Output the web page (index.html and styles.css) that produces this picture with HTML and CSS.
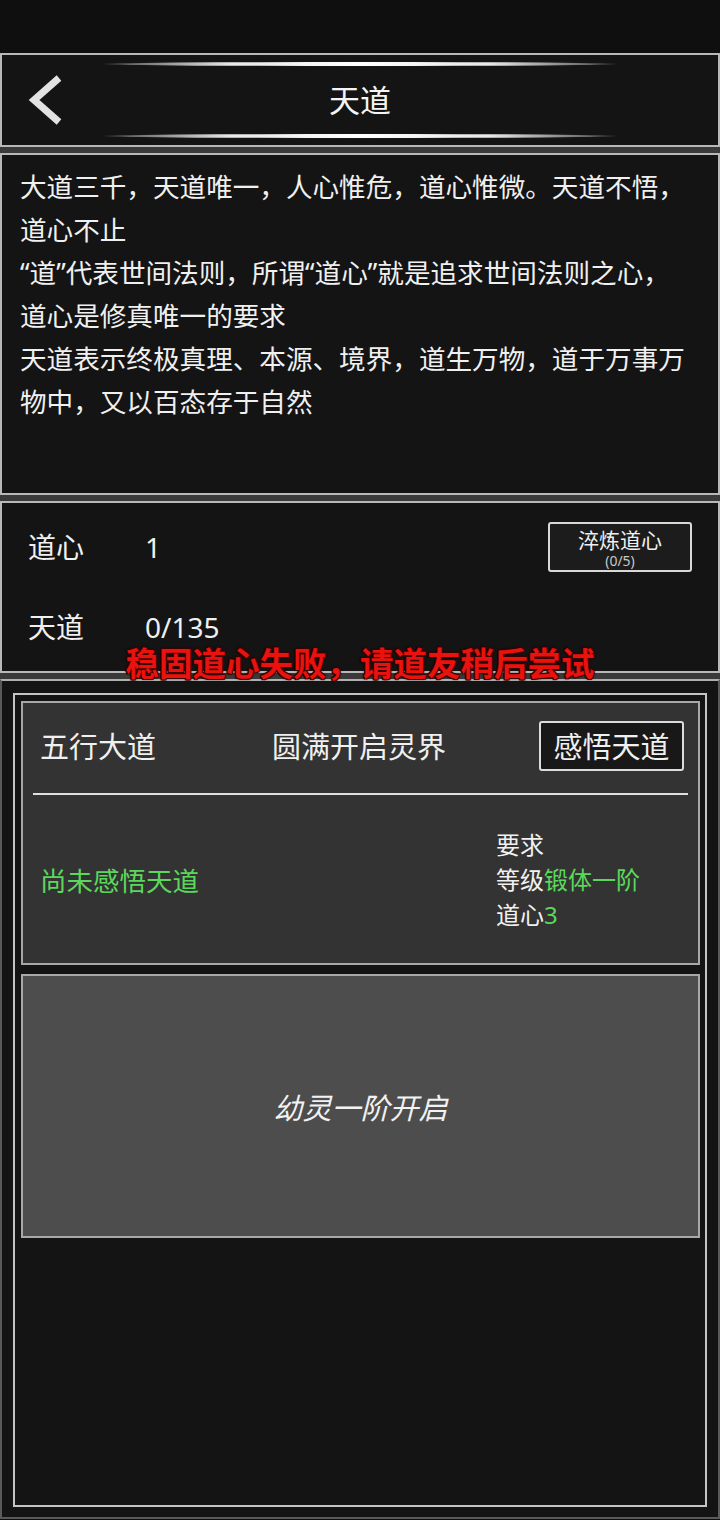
FILE: index.html
```html
<!DOCTYPE html>
<html lang="zh-CN">
<head>
<meta charset="utf-8">
<title>天道</title>
<link rel="stylesheet" href="styles.css">
</head>
<body>
<div class="status"></div>
<div class="stack">
  <header class="header">
    <svg class="back" width="36" height="52" viewBox="0 0 36 52"><polyline points="31,4 6,26 31,48" fill="none" stroke="#e2e2e2" stroke-width="7" stroke-linejoin="miter" stroke-linecap="butt"/></svg>
    <div class="title">天道</div>
    <div class="spacer"></div>
  </header>
  <section class="desc">
    <p>大道三千，天道唯一，人心惟危，道心惟微。天道不悟，<br>道心不止</p>
    <p>“道”代表世间法则，所谓“道心”就是追求世间法则之心，<br>道心是修真唯一的要求</p>
    <p>天道表示终极真理、本源、境界，道生万物，道于万事万<br>物中，又以百态存于自然</p>
  </section>
  <section class="stats">
    <div class="row">
      <span class="label">道心</span><span class="value">1</span>
      <div class="btn-small"><span class="bt">淬炼道心</span><span class="bs">(0/5)</span></div>
    </div>
    <div class="row">
      <span class="label">天道</span><span class="value">0/135</span>
    </div>
  </section>
  <section class="bottom">
    <div class="inner">
      <div class="card">
        <div class="card-head">
          <span class="h-left">五行大道</span>
          <span class="h-mid">圆满开启灵界</span>
          <div class="h-right"><div class="btn-big">感悟天道</div></div>
        </div>
        <div class="divider"></div>
        <div class="card-body">
          <div class="state">尚未感悟天道</div>
          <div class="req">
            <div>要求</div>
            <div>等级<span class="green">锻体一阶</span></div>
            <div>道心<span class="green">3</span></div>
          </div>
        </div>
      </div>
      <div class="card locked">
        <span class="locked-text">幼灵一阶开启</span>
      </div>
    </div>
  </section>
</div>
<div class="toast">稳固道心失败，请道友稍后尝试</div>
</body>
</html>
```
FILE: styles.css
```css
* { box-sizing: border-box; }
html, body { margin: 0; padding: 0; }
body {
  width: 720px;
  height: 1520px;
  background: #0f0f0f;
  font-family: "Noto Sans", "Noto Sans CJK SC", sans-serif;
  color: #f0f0f0;
  position: relative;
  overflow: hidden;
}
.status { height: 53px; background: #0f0f0f; }
.stack {
  display: flex;
  flex-direction: column;
  gap: 6px;
  background: #3a3a3a;
}
.header {
  position: relative;
  height: 94px;
  background: #141414;
  border: 2px solid #b8b8b8;
  display: flex;
  align-items: center;
  padding: 0 26px;
}
.header::before,
.header::after {
  content: "";
  position: absolute;
  left: 98px;
  width: 520px;
  height: 4px;
  border-radius: 50%;
  background: linear-gradient(90deg, rgba(255,255,255,0) 0%, #6a6a6a 6%, #e8e8e8 25%, #ffffff 50%, #e8e8e8 75%, #6a6a6a 94%, rgba(255,255,255,0) 100%);
}
.header::before { top: 7px; }
.header::after { bottom: 7px; }
.back { display: block; flex: none; }
.title {
  flex: 1;
  text-align: center;
  font-size: 31px;
  line-height: 1;
  color: #f4f4f4;
}
.spacer { width: 36px; flex: none; }

.desc {
  height: 342px;
  background: #141414;
  border: 2px solid #b8b8b8;
  padding: 11px 4px 0 18px;
  font-size: 26.6px;
  line-height: 43px;
  color: #f0f0f0;
  white-space: nowrap;
}
.desc p { margin: 0; }

.stats {
  height: 172px;
  background: #141414;
  border: 2px solid #b8b8b8;
  padding: 4px 26px 4px 26px;
  display: grid;
  grid-template-rows: 80px 80px;
}
.row { display: flex; align-items: center; }
.label { width: 117px; font-size: 28px; line-height: 1; }
.value { font-size: 28px; line-height: 1; }
.btn-small {
  margin-left: auto;
  width: 144px;
  height: 50px;
  border: 2px solid #d8d8d8;
  border-radius: 3px;
  background: #1c1c1c;
  display: flex;
  flex-direction: column;
  align-items: center;
  justify-content: center;
  padding-top: 3px;
}
.bt { font-size: 21px; line-height: 24px; color: #f0f0f0; }
.bs { font-size: 14px; line-height: 17px; color: #c8c8c8; }

.bottom {
  height: 840px;
  background: #141414;
  border: 2px solid #5a5a5a;
  border-top-color: #b0b0b0;
  padding: 12px 11px 10px 11px;
  display: flex;
}
.inner {
  flex: 1;
  border: 2px solid #c4c4c4;
  background: #141414;
  padding: 6px 5px 6px 6px;
  display: flex;
  flex-direction: column;
  gap: 9px;
}
.card {
  height: 264px;
  flex: none;
  background: #333333;
  border: 2px solid #a8a8a8;
  display: flex;
  flex-direction: column;
}
.card-head {
  height: 90px;
  flex: none;
  display: grid;
  grid-template-columns: 1fr auto 1fr;
  align-items: center;
  padding: 0 14px 4px 17px;
  font-size: 29px;
  line-height: 1;
}
.h-mid { text-align: center; margin-right: 6px; }
.h-right { display: flex; justify-content: flex-end; }
.btn-big {
  width: 145px;
  height: 50px;
  border: 2px solid #dcdcdc;
  border-radius: 3px;
  background: #181818;
  display: flex;
  align-items: center;
  justify-content: center;
  font-size: 29px;
}
.divider {
  height: 2px;
  margin: 0 10px;
  background: #e0e0e0;
  flex: none;
}
.card-body {
  flex: 1;
  display: flex;
  align-items: center;
  padding-left: 17px;
}
.state {
  flex: 1;
  font-size: 26.5px;
  color: #5bd85b;
}
.req {
  width: 202px;
  font-size: 24px;
  line-height: 35px;
  color: #f0f0f0;
}
.green { color: #5bd85b; }
.locked {
  background: #4d4d4d;
  align-items: center;
  justify-content: center;
}
.locked-text {
  font-size: 29px;
  font-style: italic;
  color: #f2f2f2;
}

.toast {
  position: absolute;
  left: 0;
  right: 0;
  top: 647px;
  text-align: center;
  font-family: "Noto Sans CJK SC", sans-serif;
  font-weight: bold;
  font-size: 33.5px;
  line-height: 29px;
  color: #e8120e;
  text-shadow: 1px 1px 0 #3a0000, -1px -1px 0 #3a0000, 1px -1px 0 #3a0000, -1px 1px 0 #3a0000, 0 0 3px #000;
}
```
